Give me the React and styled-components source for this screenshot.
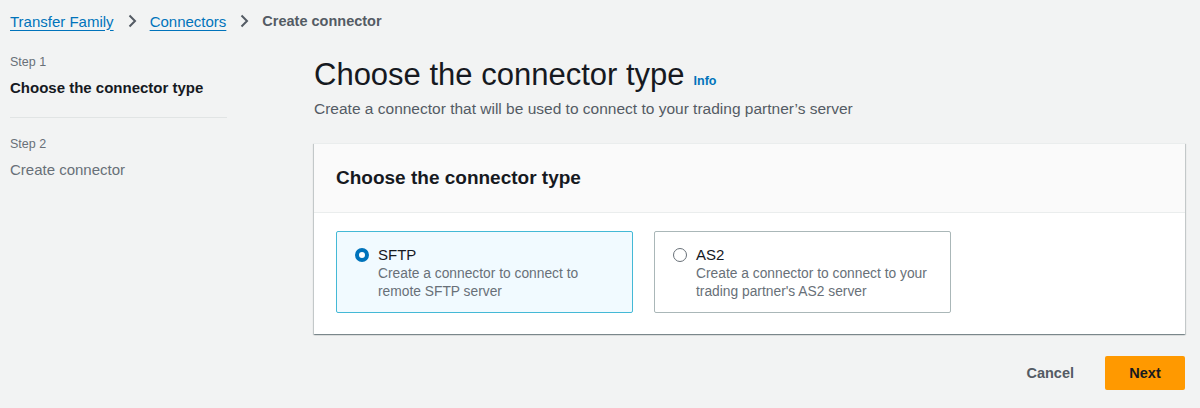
import React, { useState } from "react";
import styled, { createGlobalStyle } from "styled-components";

const GlobalStyle = createGlobalStyle`
  html, body {
    margin: 0;
    padding: 0;
    background: #f2f3f3;
    font-family: "Liberation Sans", Arial, sans-serif;
    color: #16191f;
  }
  * { box-sizing: border-box; }
`;

const options = [
  {
    id: "sftp",
    label: "SFTP",
    lines: ["Create a connector to connect to", "remote SFTP server"],
  },
  {
    id: "as2",
    label: "AS2",
    lines: ["Create a connector to connect to your", "trading partner's AS2 server"],
  },
];

function Chevron() {
  return (
    <svg width="16" height="16" viewBox="0 0 16 16" fill="none">
      <path d="M5.5 2.5 L11 8 L5.5 13.5" stroke="#545b64" strokeWidth="2" />
    </svg>
  );
}

export default function App() {
  const [selected, setSelected] = useState("sftp");

  return (
    <>
      <GlobalStyle />
      <Page>
        <Breadcrumbs>
          <Crumb href="#">Transfer Family</Crumb>
          <Chevron />
          <Crumb href="#">Connectors</Crumb>
          <Chevron />
          <Current>Create connector</Current>
        </Breadcrumbs>
        <Layout>
          <Steps>
            <Step>
              <StepNumber>Step 1</StepNumber>
              <StepTitle active>Choose the connector type</StepTitle>
            </Step>
            <Divider />
            <Step>
              <StepNumber>Step 2</StepNumber>
              <StepTitle>Create connector</StepTitle>
            </Step>
          </Steps>
          <Main>
            <Heading>
              <Title>Choose the connector type</Title>
              <Info href="#">Info</Info>
            </Heading>
            <Subtitle>
              Create a connector that will be used to connect to your trading partner’s server
            </Subtitle>
            <Card>
              <CardHeader>Choose the connector type</CardHeader>
              <CardBody>
                <Tiles>
                  {options.map((o) => (
                    <Tile
                      key={o.id}
                      $active={selected === o.id}
                      onClick={() => setSelected(o.id)}
                    >
                      <Radio $active={selected === o.id} />
                      <TileText>
                        <TileLabel>{o.label}</TileLabel>
                        <TileDesc>
                          {o.lines[0]}
                          <br />
                          {o.lines[1]}
                        </TileDesc>
                      </TileText>
                    </Tile>
                  ))}
                </Tiles>
              </CardBody>
            </Card>
            <Actions>
              <CancelButton>Cancel</CancelButton>
              <NextButton>Next</NextButton>
            </Actions>
          </Main>
        </Layout>
      </Page>
    </>
  );
}

const Page = styled.div`
  width: 1200px;
  height: 408px;
  padding: 10px 15px 0 10px;
`;

const Breadcrumbs = styled.nav`
  display: flex;
  align-items: center;
  gap: 7px;
  height: 22px;
  font-size: 15px;
  svg {
    margin: 0 3px;
  }
`;

const Crumb = styled.a`
  color: #0073bb;
  text-decoration: underline;
  text-underline-offset: 3px;
`;

const Current = styled.span`
  color: #545b64;
  font-weight: 700;
  font-size: 14.5px;
`;

const Layout = styled.div`
  display: flex;
  margin-top: 20px;
`;

const Steps = styled.aside`
  width: 217px;
  flex-shrink: 0;
  margin-right: 87px;
`;

const Step = styled.div`
  display: flex;
  flex-direction: column;
`;

const StepNumber = styled.div`
  font-size: 12.5px;
  color: #687078;
  line-height: 20px;
`;

const StepTitle = styled.div`
  margin-top: 2px;
  font-size: 15px;
  line-height: 28px;
  font-weight: ${(p) => (p.active ? 700 : 400)};
  color: ${(p) => (p.active ? "#16191f" : "#687078")};
`;

const Divider = styled.hr`
  border: none;
  border-top: 1px solid #e1e4e4;
  margin: 15px 0 16px;
`;

const Main = styled.main`
  flex: 1;
  display: flex;
  flex-direction: column;
`;

const Heading = styled.div`
  display: flex;
  align-items: baseline;
  gap: 9px;
  margin-top: 3px;
`;

const Title = styled.h1`
  margin: 0;
  font-size: 31px;
  font-weight: 400;
  line-height: 40px;
  color: #16191f;
`;

const Info = styled.a`
  font-size: 12.5px;
  font-weight: 700;
  color: #0073bb;
  text-decoration: none;
`;

const Subtitle = styled.p`
  margin: 3px 0 0;
  font-size: 15.5px;
  line-height: 22px;
  color: #545b64;
`;

const Card = styled.section`
  margin-top: 23px;
  background: #fff;
  box-shadow: 0 1px 1px 0 rgba(0, 28, 36, 0.3), 1px 1px 1px 0 rgba(0, 28, 36, 0.15),
    -1px 1px 1px 0 rgba(0, 28, 36, 0.15);
  border-top: 1px solid #eaeded;
`;

const CardHeader = styled.h2`
  margin: 0;
  padding: 20px 22px;
  height: 69px;
  display: flex;
  align-items: center;
  background: #fafafa;
  border-bottom: 1px solid #eaeded;
  font-size: 19px;
  font-weight: 700;
  color: #16191f;
`;

const CardBody = styled.div`
  padding: 18px 22px 21px;
`;

const Tiles = styled.div`
  display: flex;
  gap: 21px;
`;

const Tile = styled.div`
  width: 297px;
  height: 82px;
  display: flex;
  align-items: flex-start;
  gap: 9px;
  padding: 12px 18px;
  border: 1px solid ${(p) => (p.$active ? "#44b9d6" : "#aab7b8")};
  border-radius: 2px;
  background: ${(p) => (p.$active ? "#f1faff" : "#fff")};
  cursor: pointer;
`;

const Radio = styled.span`
  flex-shrink: 0;
  width: 14px;
  height: 14px;
  margin-top: 4px;
  border-radius: 50%;
  border: ${(p) => (p.$active ? "4px solid #0073bb" : "1px solid #687078")};
  background: #fff;
`;

const TileText = styled.div`
  display: flex;
  flex-direction: column;
`;

const TileLabel = styled.div`
  font-size: 15px;
  line-height: 21px;
  color: #16191f;
`;

const TileDesc = styled.div`
  font-size: 13.8px;
  line-height: 18px;
  color: #687078;
`;

const Actions = styled.div`
  display: flex;
  justify-content: flex-end;
  align-items: center;
  gap: 31px;
  margin-top: 22px;
`;

const CancelButton = styled.button`
  border: none;
  background: none;
  padding: 0;
  font-family: inherit;
  font-size: 14.5px;
  font-weight: 700;
  color: #545b64;
  cursor: pointer;
`;

const NextButton = styled.button`
  width: 80px;
  height: 34px;
  border: none;
  border-radius: 2px;
  background: #ff9900;
  font-family: inherit;
  font-size: 14.5px;
  font-weight: 700;
  color: #16191f;
  cursor: pointer;
`;
